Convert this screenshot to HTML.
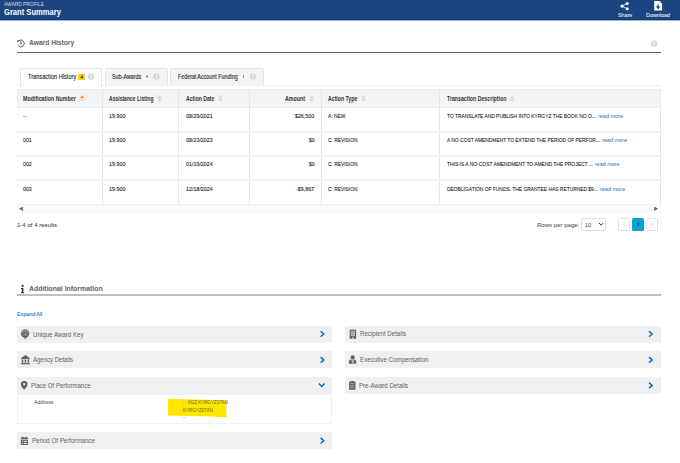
<!DOCTYPE html>
<html><head><meta charset="utf-8">
<style>
*{box-sizing:border-box;margin:0;padding:0}
html,body{width:680px;height:463px;overflow:hidden;background:#fff}
body{position:relative;font-family:"Liberation Sans",sans-serif;color:#222}
.a{position:absolute;white-space:pre;line-height:10px;height:10px;transform-origin:0 50%}
.b{position:absolute}
.tab{position:absolute;top:68px;height:18px;border:1px solid #e3e4e6;border-bottom:none;border-radius:2px 2px 0 0;background:#f3f4f6}
.vl{position:absolute;top:89px;width:1px;height:115px;background:#e6e7e8}
.hl{position:absolute;left:17px;width:644px;height:1px;background:#e9eaeb}
.acc{position:absolute;height:17px;background:#f0f0f0}
</style></head><body>
<!-- header -->
<div class="b" style="left:0;top:0;width:680px;height:19px;background:#1b4480"></div><div class="b" style="left:0;top:19px;width:680px;height:1px;background:#163c73"></div><div class="b" style="left:0;top:20px;width:680px;height:1px;background:#a3b2c9"></div>
<svg class="b" style="left:618px;top:0" width="16" height="12" viewBox="618 0 16 12">
 <g fill="#fff" stroke="#fff" stroke-width="0.8">
  <line x1="622" y1="6.1" x2="627.2" y2="3.5"/><line x1="622" y1="6.1" x2="627.2" y2="8.8"/>
 </g>
 <g fill="#fff"><circle cx="627.2" cy="3.5" r="1.55"/><circle cx="622" cy="6.1" r="1.55"/><circle cx="627.2" cy="8.8" r="1.55"/></g>
</svg>
<svg class="b" style="left:650px;top:0" width="16" height="12" viewBox="650 0 16 12">
 <path d="M654.2 0.9 H659.6 L662.1 3.4 V10.6 H654.2 Z" fill="#fff"/>
 <path d="M659.6 0.9 V3.4 H662.1" fill="#c9d3e3"/>
 <path d="M657.4 4.4 H658.8 V6.6 H660.4 L658.1 9.2 L655.8 6.6 H657.4 Z" fill="#1b4480"/>
</svg>

<!-- award history title -->
<svg class="b" style="left:15px;top:38px" width="12" height="12" viewBox="15 38 12 12">
 <path d="M18.6 40.9 A3.4 3.4 0 1 1 18.4 45.8" fill="none" stroke="#4a4f57" stroke-width="0.95"/>
 <path d="M16.9 40.3 L19.6 40.5 L17.6 42.6 Z" fill="#4a4f57"/>
 <path d="M20.4 41.6 L21.6 44.2" stroke="#4a4f57" stroke-width="1.1"/>
</svg>
<div class="b" style="left:17px;top:52.1px;width:644px;height:1.3px;background:#626262"></div>
<svg class="b" style="left:650px;top:39px" width="8" height="9" viewBox="650 39 8 9">
 <circle cx="654" cy="43.4" r="3.2" fill="#d9dadc"/>
 <rect x="653.55" y="42.6" width="0.9" height="2.6" fill="#fff"/><circle cx="654" cy="41.6" r="0.5" fill="#fff"/>
</svg>

<!-- tabs -->
<div class="hl" style="top:85px;background:#eeeff0"></div>
<div class="tab" style="left:20px;width:82px;background:#fff;height:18.5px"></div>
<div class="tab" style="left:105px;width:63px"></div>
<div class="tab" style="left:170px;width:94px"></div>
<div class="b" style="left:78.1px;top:73.5px;width:6.8px;height:6.4px;background:#fdd000;border-radius:0.5px"></div>
<svg class="b" style="left:78px;top:73px" width="8" height="8" viewBox="78 73 8 8"><path d="M82.2 75.4 L80.6 77.6 H83.2 M82.3 75.6 V78.6" fill="none" stroke="#3d3a1a" stroke-width="0.7"/></svg>
<div class="b" style="left:143.8px;top:73.5px;width:5.7px;height:6.4px;background:#fafafb;border-radius:0.5px"></div>
<div class="b" style="left:145.5px;top:74.9px;width:2.3px;height:3.4px;border:0.6px solid #8a8a90;border-radius:1px"></div>
<div class="b" style="left:240.6px;top:73.5px;width:5.7px;height:6.4px;background:#fafafb;border-radius:0.5px"></div>
<div class="b" style="left:242.8px;top:74.9px;width:0.8px;height:3.4px;background:#8a8a90"></div>
<svg class="b" style="left:0;top:70px" width="680" height="14" viewBox="0 70 680 14">
 <g fill="#d6d7d9"><circle cx="91.1" cy="76.5" r="3.2"/><circle cx="156.4" cy="76.5" r="3.2"/><circle cx="253" cy="76.5" r="3.2"/></g>
 <g fill="#fff">
  <rect x="90.6" y="75.6" width="1" height="2.8"/><circle cx="91.1" cy="74.5" r="0.6"/>
  <rect x="155.9" y="75.6" width="1" height="2.8"/><circle cx="156.4" cy="74.5" r="0.6"/>
  <rect x="252.5" y="75.6" width="1" height="2.8"/><circle cx="253" cy="74.5" r="0.6"/>
 </g>
</svg>

<!-- table -->
<div class="b" style="left:660px;top:89px;width:1px;height:115.5px;background:#e6e7e8"></div>
<div class="b" style="left:17px;top:89px;width:644px;height:18px;background:#f3f4f6;border:1px solid #eaebec;border-bottom:none;border-radius:2px 2px 0 0"></div>
<div class="vl" style="left:102px"></div>
<div class="vl" style="left:178px"></div>
<div class="vl" style="left:248.7px"></div>
<div class="vl" style="left:321px"></div>
<div class="vl" style="left:439px"></div>
<div class="hl" style="top:107px;height:1px;background:#ebeced"></div>
<div class="hl" style="top:130.9px;height:1.8px;background:#eff0f1"></div>
<div class="hl" style="top:155.2px;height:1.8px;background:#eff0f1"></div>
<div class="hl" style="top:179.4px;height:1.8px;background:#eff0f1"></div>
<div class="hl" style="top:203.5px;height:1.8px;background:#eff0f1"></div>
<svg class="b" style="left:0;top:94px" width="680" height="9" viewBox="0 94 680 9">
 <path d="M79.6 98.3 L82.1 95.2 L84.6 98.3 Z" fill="#fa9a2a"/><path d="M79.6 98.9 L82.1 102 L84.6 98.9 Z" fill="#dcdde0"/>
 <g fill="#d8d9dc">
 <path d="M156.8 98.3 L159.4 95.2 L162 98.3 Z M156.8 98.9 L159.4 102 L162 98.9 Z"/>
 <path d="M217.8 98.3 L220.3 95.2 L222.8 98.3 Z M217.8 98.9 L220.3 102 L222.8 98.9 Z"/>
 <path d="M309.2 98.3 L311.7 95.2 L314.2 98.3 Z M309.2 98.9 L311.7 102 L314.2 98.9 Z"/>
 <path d="M361 98.3 L363.5 95.2 L366 98.3 Z M361 98.9 L363.5 102 L366 98.9 Z"/>
 <path d="M510 98.3 L512.4 95.2 L514.8 98.3 Z M510 98.9 L512.4 102 L514.8 98.9 Z"/>
 </g>
</svg>
<div class="b" style="left:16.6px;top:204.8px;width:644px;height:7.9px;background:#f9f9f9"></div>
<svg class="b" style="left:0;top:204px" width="680" height="9" viewBox="0 204 680 9">
 <path d="M18.9 208.8 L22.9 206.5 V211.1 Z" fill="#6a6a6a"/><path d="M658.1 208.8 L654.1 206.5 V211.1 Z" fill="#6a6a6a"/>
</svg>

<!-- pagination -->
<div class="b" style="left:580.6px;top:218px;width:25.1px;height:13.2px;border:1px solid #dcdcdc;border-radius:1.5px;background:#fff"></div>
<svg class="b" style="left:596px;top:220px" width="10" height="8" viewBox="596 220 10 8">
 <path d="M599 223 L601.1 225.2 L603.2 223" fill="none" stroke="#333" stroke-width="1"/>
</svg>
<div class="b" style="left:618.4px;top:218px;width:11.9px;height:12.5px;border:1px solid #e1e1e1;border-radius:1.5px;background:#fff"></div>
<div class="b" style="left:632.1px;top:218px;width:11.9px;height:12.5px;border-radius:1.5px;background:#07a2d4"></div>
<div class="b" style="left:646.4px;top:218px;width:11.9px;height:12.5px;border:1px solid #e1e1e1;border-radius:1.5px;background:#fff"></div>
<svg class="b" style="left:618px;top:218px" width="42" height="13" viewBox="618 218 42 13">
 <path d="M624.9 222.8 L623.7 224.2 L624.9 225.6" fill="none" stroke="#aaa" stroke-width="0.6"/>
 <path d="M651.8 222.8 L653 224.2 L651.8 225.6" fill="none" stroke="#aaa" stroke-width="0.6"/>
 <rect x="637.6" y="222.6" width="1" height="3.4" fill="#1d2b3a"/>
</svg>

<!-- additional information -->
<svg class="b" style="left:19px;top:283px" width="8" height="12" viewBox="19 283 8 12">
 <circle cx="22.6" cy="285.9" r="1.1" fill="#333"/>
 <path d="M21 287.9 H23.4 V292.2 H24.2 V293.3 H21 V292.2 H21.8 V288.9 H21 Z" fill="#333"/>
</svg>
<div class="b" style="left:16.5px;top:294px;width:644.5px;height:1.5px;background:#bfc0c2"></div>

<!-- accordions -->
<div class="acc" style="left:17px;top:325.5px;width:315.2px"></div>
<div class="acc" style="left:17px;top:351.1px;width:315.2px"></div>
<div class="acc" style="left:17px;top:377px;width:315.2px;height:17.5px"></div>
<div class="b" style="left:17px;top:394.5px;width:315.2px;height:29.2px;border:1px solid #f1f1f1;border-top:none;background:#fff"></div>
<div class="acc" style="left:17px;top:432.2px;width:315.2px"></div>
<div class="acc" style="left:345.1px;top:325.5px;width:315.6px"></div>
<div class="acc" style="left:345.1px;top:351.1px;width:315.6px"></div>
<div class="acc" style="left:345.1px;top:376.8px;width:315.6px"></div>
<svg class="b" style="left:0;top:320px" width="680" height="135" viewBox="0 320 680 135">
 <g fill="none" stroke="#0f68b3" stroke-width="1.45" stroke-linejoin="miter">
  <path d="M320.6 331.2 L323.8 334 L320.6 336.8"/>
  <path d="M320.6 357.1 L323.8 359.9 L320.6 362.7"/>
  <path d="M319 383.4 L321.8 386.4 L324.6 383.4"/>
  <path d="M320.6 437.9 L323.8 440.7 L320.6 443.5"/>
  <path d="M649 331.2 L652.2 334 L649 336.8"/>
  <path d="M649 357.1 L652.2 359.9 L649 362.7"/>
  <path d="M649 382.6 L652.2 385.4 L649 388.2"/>
 </g>
 <g fill="#5b616b">
  <!-- fingerprint -->
  <circle cx="25.1" cy="333.5" r="4.2"/><path d="M23.8 337.2 L25.4 339.2 L26.6 337.2 Z"/>
  <!-- bank -->
  <path d="M20.9 358.2 L25.45 355.1 L30 358.2 Z"/>
  <rect x="20.9" y="358.2" width="9.1" height="0.8"/>
  <rect x="21.8" y="359.4" width="1.5" height="3.3"/><rect x="24.7" y="359.4" width="1.5" height="3.3"/><rect x="27.6" y="359.4" width="1.5" height="3.3"/>
  <rect x="20.9" y="363.1" width="9.1" height="1.2"/>
  <!-- pin -->
  <path d="M24.2 380.9 A3.3 3.3 0 0 1 27.5 384.2 C27.5 386.2 25.6 388 24.2 389.8 C22.8 388 20.9 386.2 20.9 384.2 A3.3 3.3 0 0 1 24.2 380.9 Z"/>
  <!-- calendar -->
  <rect x="20.9" y="437.4" width="7" height="7.6" rx="0.5"/><path d="M21.8 437.6 L22.7 436.1 L23.6 437.6 Z M25.2 437.6 L26.1 436.1 L27 437.6 Z"/>
  <!-- building -->
  <rect x="349.7" y="329.7" width="6.4" height="9.1"/>
  <!-- person -->
  <circle cx="352.7" cy="357.3" r="2.05"/>
  <path d="M348.9 363.8 V361.6 C348.9 360.2 350.2 359.5 351.3 359.5 H353.9 C355 359.5 356.3 360.2 356.3 361.6 V363.8 Z"/>
  <!-- clipboard -->
  <rect x="349.1" y="381.6" width="6.4" height="8.2" rx="0.5"/>
  <rect x="351.2" y="380.9" width="2.2" height="1.3"/>
 </g>
 <g fill="#efefef">
  <circle cx="24.2" cy="384.1" r="1.2"/>
  <rect x="22" y="440.8" width="1" height="1"/><rect x="23.8" y="440.8" width="3.2" height="1"/>
  <rect x="22" y="443" width="1" height="1"/><rect x="23.8" y="443" width="3.2" height="1"/>
  <rect x="20.9" y="439" width="7" height="0.6"/>
  </g><g fill="#b9bcc0"><rect x="350.8" y="330.8" width="4.2" height="5.2"/></g><g fill="#8d9197"><rect x="352.6" y="330.8" width="0.6" height="5.2"/><rect x="350.8" y="332.5" width="4.2" height="0.5"/><rect x="350.8" y="334.2" width="4.2" height="0.5"/></g><g fill="#c9cbce"><rect x="352.2" y="336.7" width="1.4" height="2.1"/></g><g fill="#efefef">
  </g><g fill="#b3b6ba"><path d="M351.5 359.6 H353.9 L353.5 363.8 H351.9 Z"/></g><g fill="#efefef">
  <rect x="350.2" y="383.3" width="4.2" height="0.5"/><rect x="350.2" y="385.1" width="4.2" height="0.5"/><rect x="350.2" y="386.9" width="4.2" height="0.5"/>
  <path d="M22.3 331.6 A3.2 3.2 0 0 1 28 331.9" fill="none" stroke="#c9cbce" stroke-width="0.5"/>
  <path d="M21.9 334.2 A3.2 3.2 0 0 1 28.3 334" fill="none" stroke="#c9cbce" stroke-width="0.5"/>
  <path d="M23.2 336.2 A2 2 0 0 1 27 335.8" fill="none" stroke="#c9cbce" stroke-width="0.5"/>
  <path d="M24.4 333.4 A0.9 0.9 0 0 1 26 333.6 V336" fill="none" stroke="#c9cbce" stroke-width="0.5"/>
  </g>
 <!-- highlight -->
 <path d="M168 398.8 L185 399.3 L226.5 400.2 L226.5 417.3 L205 416.3 L190 415.9 L168 415.5 Z" fill="#ffe600"/>
</svg>

<!-- texts -->
<div class="a" style="left:4.35px;top:-0.60px;font-size:5.45px;color:#d5dbe6;transform:scaleX(0.895);">AWARD PROFILE</div>
<div class="a" style="left:4.35px;top:7.90px;font-size:8.24px;font-weight:bold;color:#fff;transform:scaleX(0.922);">Grant Summary</div>
<div class="a" style="left:618.00px;top:10.10px;font-size:5.03px;-webkit-text-stroke:0.1px currentColor;color:#dfe5ee;transform:scaleX(1.051);">Share</div>
<div class="a" style="left:645.80px;top:10.20px;font-size:5.03px;-webkit-text-stroke:0.1px currentColor;color:#dfe5ee;transform:scaleX(1.082);">Download</div>
<div class="a" style="left:28.80px;top:38.30px;font-size:7.68px;font-weight:bold;color:#626262;transform:scaleX(0.870);">Award History</div>
<div class="a" style="left:27.60px;top:71.60px;font-size:6.42px;-webkit-text-stroke:0.1px currentColor;color:#222;transform:scaleX(0.878);">Transaction History</div>
<div class="a" style="left:112.40px;top:71.60px;font-size:6.42px;-webkit-text-stroke:0.1px currentColor;color:#222;transform:scaleX(0.843);">Sub-Awards</div>
<div class="a" style="left:178.00px;top:71.60px;font-size:6.42px;-webkit-text-stroke:0.1px currentColor;color:#222;transform:scaleX(0.837);">Federal Account Funding</div>
<div class="a" style="left:23.20px;top:93.70px;font-size:6.42px;font-weight:bold;color:#333;transform:scaleX(0.829);">Modification Number</div>
<div class="a" style="left:109.20px;top:93.70px;font-size:6.42px;font-weight:bold;color:#333;transform:scaleX(0.786);">Assistance Listing</div>
<div class="a" style="left:185.50px;top:93.70px;font-size:6.42px;font-weight:bold;color:#333;transform:scaleX(0.798);">Action Date</div>
<div class="a" style="left:285.00px;top:93.70px;font-size:6.42px;font-weight:bold;color:#333;transform:scaleX(0.824);">Amount</div>
<div class="a" style="left:327.90px;top:93.70px;font-size:6.42px;font-weight:bold;color:#333;transform:scaleX(0.810);">Action Type</div>
<div class="a" style="left:447.00px;top:93.70px;font-size:6.42px;font-weight:bold;color:#333;transform:scaleX(0.813);">Transaction Description</div>
<div class="a" style="left:22.90px;top:111.40px;font-size:5.73px;-webkit-text-stroke:0.1px currentColor;color:#222;transform:scaleX(1.021);font-size:5.6px">--</div>
<div class="a" style="left:109.20px;top:111.10px;font-size:6.01px;-webkit-text-stroke:0.1px currentColor;color:#222;transform:scaleX(0.893);">19.900</div>
<div class="a" style="left:185.60px;top:111.10px;font-size:6.01px;-webkit-text-stroke:0.1px currentColor;color:#222;transform:scaleX(0.891);">08/29/2021</div>
<div class="a" style="left:295.00px;top:111.10px;font-size:6.01px;-webkit-text-stroke:0.1px currentColor;color:#222;transform:scaleX(0.880);">$26,500</div>
<div class="a" style="left:327.80px;top:111.10px;font-size:6.15px;-webkit-text-stroke:0.1px currentColor;color:#222;transform:scaleX(0.796);">A: NEW</div>
<div class="a" style="left:447.00px;top:111.10px;font-size:6.01px;-webkit-text-stroke:0.1px currentColor;color:#222;transform:scaleX(0.814);">TO TRANSLATE AND PUBLISH INTO KYRGYZ THE BOOK NO O...</div>
<div class="a" style="left:598.00px;top:111.10px;font-size:6.01px;-webkit-text-stroke:0.03px currentColor;color:#2a78c6;transform:scaleX(0.913);">read more</div>
<div class="a" style="left:23.00px;top:135.20px;font-size:5.73px;-webkit-text-stroke:0.1px currentColor;color:#222;transform:scaleX(0.921);">001</div>
<div class="a" style="left:109.20px;top:135.20px;font-size:6.01px;-webkit-text-stroke:0.1px currentColor;color:#222;transform:scaleX(0.893);">19.900</div>
<div class="a" style="left:185.60px;top:135.20px;font-size:6.01px;-webkit-text-stroke:0.1px currentColor;color:#222;transform:scaleX(0.891);">08/23/2023</div>
<div class="a" style="left:308.50px;top:135.20px;font-size:6.01px;-webkit-text-stroke:0.1px currentColor;color:#222;transform:scaleX(0.838);">$0</div>
<div class="a" style="left:327.80px;top:135.20px;font-size:6.15px;-webkit-text-stroke:0.1px currentColor;color:#222;transform:scaleX(0.792);">C: REVISION</div>
<div class="a" style="left:447.00px;top:135.20px;font-size:6.01px;-webkit-text-stroke:0.1px currentColor;color:#222;transform:scaleX(0.811);">A NO-COST AMENDMENT TO EXTEND THE PERIOD OF PERFOR...</div>
<div class="a" style="left:601.80px;top:135.20px;font-size:6.01px;-webkit-text-stroke:0.03px currentColor;color:#2a78c6;transform:scaleX(0.913);">read more</div>
<div class="a" style="left:23.00px;top:159.40px;font-size:5.73px;-webkit-text-stroke:0.1px currentColor;color:#222;transform:scaleX(0.921);">002</div>
<div class="a" style="left:109.20px;top:159.40px;font-size:6.01px;-webkit-text-stroke:0.1px currentColor;color:#222;transform:scaleX(0.893);">19.900</div>
<div class="a" style="left:185.60px;top:159.40px;font-size:6.01px;-webkit-text-stroke:0.1px currentColor;color:#222;transform:scaleX(0.891);">01/19/2024</div>
<div class="a" style="left:308.50px;top:159.40px;font-size:6.01px;-webkit-text-stroke:0.1px currentColor;color:#222;transform:scaleX(0.838);">$0</div>
<div class="a" style="left:327.80px;top:159.40px;font-size:6.15px;-webkit-text-stroke:0.1px currentColor;color:#222;transform:scaleX(0.792);">C: REVISION</div>
<div class="a" style="left:447.00px;top:159.40px;font-size:6.01px;-webkit-text-stroke:0.1px currentColor;color:#222;transform:scaleX(0.821);">THIS IS A NO-COST AMENDMENT TO AMEND THE PROJECT ...</div>
<div class="a" style="left:595.00px;top:159.40px;font-size:6.01px;-webkit-text-stroke:0.03px currentColor;color:#2a78c6;transform:scaleX(0.891);">read more</div>
<div class="a" style="left:23.00px;top:183.50px;font-size:5.73px;-webkit-text-stroke:0.1px currentColor;color:#222;transform:scaleX(0.921);">003</div>
<div class="a" style="left:109.20px;top:183.50px;font-size:6.01px;-webkit-text-stroke:0.1px currentColor;color:#222;transform:scaleX(0.893);">19.900</div>
<div class="a" style="left:185.60px;top:183.50px;font-size:6.01px;-webkit-text-stroke:0.1px currentColor;color:#222;transform:scaleX(0.891);">12/18/2024</div>
<div class="a" style="left:295.90px;top:183.50px;font-size:6.01px;-webkit-text-stroke:0.1px currentColor;color:#222;transform:scaleX(0.893);">-$9,867</div>
<div class="a" style="left:327.80px;top:183.50px;font-size:6.15px;-webkit-text-stroke:0.1px currentColor;color:#222;transform:scaleX(0.792);">C: REVISION</div>
<div class="a" style="left:447.00px;top:183.50px;font-size:6.01px;-webkit-text-stroke:0.1px currentColor;color:#222;transform:scaleX(0.815);">DEOBLIGATION OF FUNDS. THE GRANTEE HAS RETURNED $9...</div>
<div class="a" style="left:599.70px;top:183.50px;font-size:6.01px;-webkit-text-stroke:0.03px currentColor;color:#2a78c6;transform:scaleX(0.913);">read more</div>
<div class="a" style="left:16.80px;top:220.20px;font-size:6.15px;-webkit-text-stroke:0.05px currentColor;color:#444;transform:scaleX(0.984);">1-4 of 4 results</div>
<div class="a" style="left:537.00px;top:220.00px;font-size:6.15px;-webkit-text-stroke:0.05px currentColor;color:#555;transform:scaleX(0.983);">Rows per page:</div>
<div class="a" style="left:585.30px;top:220.20px;font-size:5.87px;color:#444;transform:scaleX(0.950);">10</div>
<div class="a" style="left:28.90px;top:284.25px;font-size:7.12px;font-weight:bold;color:#626262;transform:scaleX(0.971);">Additional Information</div>
<div class="a" style="left:16.60px;top:309.30px;font-size:6.15px;-webkit-text-stroke:0.15px currentColor;color:#2f80d0;transform:scaleX(0.871);">Expand All</div>
<div class="a" style="left:33.10px;top:329.70px;font-size:6.42px;color:#5d6269;transform:scaleX(0.961);">Unique Award Key</div>
<div class="a" style="left:32.80px;top:355.20px;font-size:6.42px;color:#5d6269;transform:scaleX(0.938);">Agency Details</div>
<div class="a" style="left:31.00px;top:380.50px;font-size:6.42px;color:#5d6269;transform:scaleX(0.946);">Place Of Performance</div>
<div class="a" style="left:31.70px;top:435.90px;font-size:6.42px;color:#5d6269;transform:scaleX(0.959);">Period Of Performance</div>
<div class="a" style="left:360.40px;top:329.30px;font-size:6.42px;color:#5d6269;transform:scaleX(0.958);">Recipient Details</div>
<div class="a" style="left:360.10px;top:355.00px;font-size:6.42px;color:#5d6269;transform:scaleX(0.967);">Executive Compensation</div>
<div class="a" style="left:359.00px;top:380.50px;font-size:6.42px;color:#5d6269;transform:scaleX(0.952);">Pre-Award Details</div>
<div class="a" style="left:33.70px;top:397.10px;font-size:5.59px;color:#444;transform:scaleX(0.951);">Address</div>
<div class="a" style="left:183.00px;top:397.40px;font-size:5.03px;color:#6b6a3a;transform:scaleX(0.882);">; ; KGZ KYRGYZSTAN</div>
<div class="a" style="left:183.00px;top:404.60px;font-size:5.03px;color:#6b6a3a;transform:scaleX(0.890);">KYRGYZSTAN</div>
<div class="a" style="left:183.20px;top:412.20px;font-size:5.03px;color:#888;transform:scaleX(0.894);">--</div>
</body></html>
